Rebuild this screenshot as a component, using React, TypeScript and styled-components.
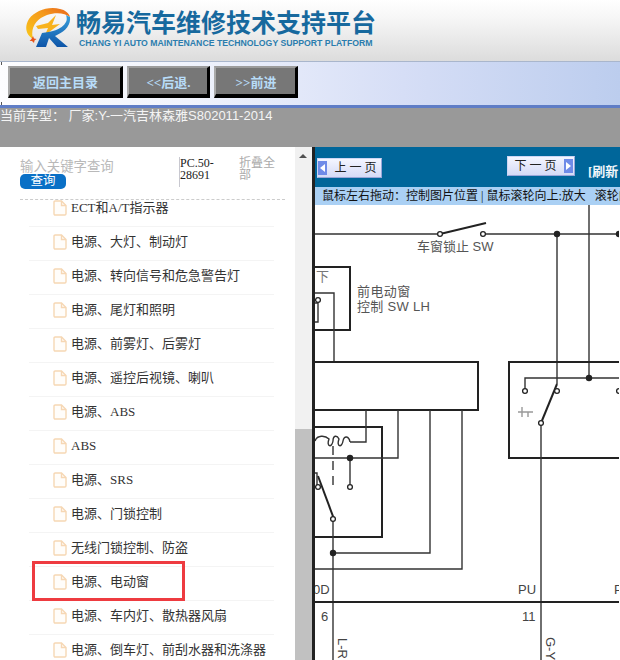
import React from "react";
import styled, { createGlobalStyle } from "styled-components";

const Global = createGlobalStyle`
  html, body { margin: 0; padding: 0; width: 620px; height: 660px; overflow: hidden; background: #fff; }
  * { box-sizing: border-box; }
`;
const SERIF = `"Liberation Serif", "Noto Sans CJK SC", serif`;
const SANS = `"Liberation Sans", "Noto Sans CJK SC", sans-serif`;

const Page = styled.div`width: 620px; height: 660px; display: flex; flex-direction: column; overflow: hidden;`;
const Header = styled.header`
  height: 62px; flex: none; display: flex; align-items: flex-start; gap: 3px; padding: 8px 0 0 25px;
  background: linear-gradient(#fff 0%, #f6f6f6 30%, #dcdcdc 100%);
  border-bottom: 1px solid #a9b6cc;
`;
const Brand = styled.div`display: flex; flex-direction: column; margin-top: 1px;`;
const Title = styled.div`
  font: bold 25px/28px ${SANS}; color: #17699e; white-space: nowrap;
`;
const Sub = styled.div`
  font: bold 8.7px/11px ${SANS}; color: #2b7dae; white-space: nowrap; margin: 1px 0 0 3px;
`;
const Toolbar = styled.nav`
  position: relative; height: 46px; flex: none; display: flex; gap: 4px; padding: 4px 0 0 8px; align-items: flex-start;
  background: linear-gradient(90deg, #fdfdff 0%, #f0f3fc 30%, #d6def6 65%, #bccdee 100%);
  border-bottom: 3px solid #5f7dc6;
  &::before, &::after { content: ""; position: absolute; left: 1px; width: 1px; height: 3px; background: #555; }
  &::before { top: 0; }
  &::after { bottom: 0; }
`;
const ToolButton = styled.button<{ $w: number }>`
  width: ${(p) => p.$w}px; height: 32px; margin: 0; padding: 0 0 0 1px; background: #777;
  border-style: solid; border-width: 2px 3px 4px 2px;
  border-color: #9c9c9c #000 #000 #aaa;
  font: bold 13px ${SERIF}; color: #b8dcf8; text-align: center;
`;
const CarBar = styled.div`
  height: 39px; flex: none; background: #999; color: #f4f4f4;
  font: 13px/16px ${SANS}; white-space: nowrap;
`;
const Body = styled.main`flex: 1; display: flex; min-height: 0;`;
const Side = styled.aside`width: 295px; flex: none; display: flex; flex-direction: column; min-height: 0;`;
const SearchArea = styled.div`
  height: 53px; flex: none; margin: 0 10px 0 20px; border-bottom: 1px dashed #ccc;
  display: grid; grid-template-columns: 159px 60px 1fr; padding-top: 10px;
`;
const SearchBox = styled.div`display: flex; flex-direction: column; align-items: flex-start; padding-top: 2px;`;
const Placeholder = styled.div`font: 13.4px/15px ${SANS}; color: #b9b9b9;`;
const SearchButton = styled.button`
  width: 46px; height: 15px; padding: 0; border: 0; border-radius: 5px; background: #0a70c6; color: #fff;
  font: 12.5px/15px ${SANS}; text-align: center;
`;
const Code = styled.div`
  font: 12px/12px ${SERIF}; color: #222; border-left: 1px solid #c8c8d0; height: 30px; width: 48px;
`;
const Collapse = styled.div`font: 12px/12px ${SANS}; color: #aaa; width: 40px;`;
const ListClip = styled.div`flex: 1; overflow: hidden; min-height: 0;`;
const List = styled.ul`list-style: none; margin: -7px 0 0; padding: 0 21px 0 29px;`;
const Row = styled.li`
  position: relative; height: 34px; display: flex; align-items: center; gap: 4px; padding: 0 0 3px 24px;
  border-bottom: 1px solid #f4f4f4; font: 13px/16px ${SERIF}; color: #333; white-space: nowrap;
`;
const Marker = styled.span`
  position: absolute; left: 3px; top: -6px; width: 153px; height: 40px; border: 3px solid #ee3b40; pointer-events: none;
`;
const ScrollTrack = styled.div`width: 17px; flex: none; background: #f1f1f1; position: relative;`;
const ScrollUp = styled.span`
  position: absolute; left: 4px; top: 7px; width: 0; height: 0;
  border-left: 4px solid transparent; border-right: 4px solid transparent; border-bottom: 4px solid #505050;
`;
const ScrollThumb = styled.span`position: absolute; left: 0; right: 0; top: 282px; bottom: 0; background: #c1c1c1;`;
const Viewer = styled.section`
  flex: 1; min-width: 0; display: flex; flex-direction: column; border-left: 3px solid #222; overflow: hidden;
`;
const PageBar = styled.div`
  height: 40px; flex: none; background: #00669a; display: flex; align-items: flex-start; padding: 9px 0 0 2px; white-space: nowrap;
`;
const PageButton = styled.button<{ $w: number; $next?: boolean }>`
  width: ${(p) => p.$w}px; height: 20px; padding: 0 ${(p) => (p.$next ? 11 : 0)}px 0 ${(p) => (p.$next ? 0 : 12)}px; margin: ${(p) => (p.$next ? "0 0 0 125px" : "2px 0 0")};
  position: relative; border: 1px solid #cdd6f4; border-right-color: #9aa6d8; border-bottom-color: #9aa6d8;
  background: linear-gradient(#f4f6ff, #d5dbf6); font: 12px/17px ${SERIF}; color: #222;
`;
const PageArrow = styled.span<{ $next?: boolean }>`
  position: absolute; top: 2px; bottom: 2px; width: 9px; ${(p) => (p.$next ? "right: 1px;" : "left: 0;")}
  background: #6f8be8; display: flex; align-items: center; justify-content: center;
  &::after {
    content: ""; width: 0; height: 0; border-top: 4px solid transparent; border-bottom: 4px solid transparent;
    ${(p) => (p.$next ? "border-left: 5px solid #fff;" : "border-right: 5px solid #fff;")}
  }
`;
const Refresh = styled.span`font: bold 13px/16px ${SERIF}; color: #f2f6fa; margin: 8px 0 0 13px;`;
const HintBar = styled.div`
  height: 18px; flex: none; background: #aad0f4; font: 12px/18px ${SERIF}; color: #111; padding-left: 7px; white-space: nowrap;
`;
const Diagram = styled.svg`display: block; flex: none;`;

const items = [
  "ECT和A/T指示器", "电源、大灯、制动灯", "电源、转向信号和危急警告灯", "电源、尾灯和照明",
  "电源、前雾灯、后雾灯", "电源、遥控后视镜、喇叭", "电源、ABS", "ABS", "电源、SRS", "电源、门锁控制",
  "无线门锁控制、防盗", "电源、电动窗", "电源、车内灯、散热器风扇", "电源、倒车灯、前刮水器和洗涤器",
];

const FileIcon = () => (
  <svg width="14" height="16" viewBox="0 0 14 16" fill="#fffdfa" stroke="#f6d7b4" strokeWidth="1.4">
    <path d="M1 2.2Q1 1 2.2 1H8.5L13 5.5V13.8Q13 15 11.8 15H2.2Q1 15 1 13.8Z" />
    <path d="M8.5 1V5.5H13" fill="none" />
  </svg>
);

const Logo = () => (
  <svg width="48" height="42" viewBox="25 8 48 42">
    <defs>
      <linearGradient id="ring" x1="0" y1="1" x2="1" y2="0">
        <stop offset="0" stopColor="#f9c81a" />
        <stop offset="0.6" stopColor="#f59a1c" />
        <stop offset="1" stopColor="#e8641a" />
      </linearGradient>
      <linearGradient id="blue" x1="0" y1="0" x2="0" y2="1">
        <stop offset="0" stopColor="#39a0dc" />
        <stop offset="1" stopColor="#0e55a8" />
      </linearGradient>
    </defs>
    <path d="M33 39C26 35 24 27 29 19C35 11 48 6 60 9C65 10 69 13 70 17C65 13 56 12 47 15C36 19 30 28 33 39Z" fill="url(#ring)" />
    <path d="M36 26L48 23L56 15L52 25L60 24L45 35L48 28L38 29Z" fill="#f8b21c" />
    <path d="M70 17C71 24 66 31 57 35L55 36L68 47H57L49 38L46 47H36L42 33C50 32 62 30 66 22C67 20 67 18 66 15Z" fill="url(#blue)" />
    <path d="M33 36L34 38.4L36.5 39L34.5 40.5L34 43L32 41L29.6 41L31.5 39Z" fill="#e8541a" />
  </svg>
);

const Dot = ({ x, y }: { x: number; y: number }) => <circle cx={x} cy={y} r="3.2" fill="#222" stroke="none" />;
const Hollow = ({ x, y }: { x: number; y: number }) => <circle cx={x} cy={y} r="2.4" fill="#fff" stroke="#222" strokeWidth="1.3" />;

const WiringDiagram = () => (
  <Diagram width="304" height="455" viewBox="316 205 304 455" fill="none" stroke="#333" strokeWidth="1.4">
    <path d="M316 234H441M484 234H620M558 234V384M590 205V378" />
    <path d="M441 234L487 223" stroke="#222" strokeWidth="2" />
    <path d="M316 267H351V330H316" strokeWidth="2" stroke="#222" />
    <path d="M316 293H335V362" />
    <path d="M316 303H319V322H316" />
    <path d="M316 362H479V410H316" strokeWidth="2" stroke="#222" />
    <path d="M620 362H510V458H620" strokeWidth="2" stroke="#222" />
    <path d="M526 391V378H620" />
    <path d="M542 423V660" />
    <path d="M542 423L558 384" stroke="#222" strokeWidth="2" />
    <path d="M316 427H383V537H316" strokeWidth="2" stroke="#222" />
    <path d="M367 410V442H351M399 410V458H316M431 410V553H334M463 410V569H316" />
    <path d="M351 458V487" />
    <path d="M316 441C318 435 326 435 330 439C327 447 333 448 334 441C334 435 338 435 340 439C337 447 343 448 344 441C345 435 350 436 351 442" />
    <path d="M334 446V488" strokeDasharray="9 6" />
    <path d="M334 519V660" />
    <path d="M319 476L335 519" stroke="#222" strokeWidth="2" />
    <path d="M316 473H318V487" />
    <path d="M316 602H620" stroke="#222" strokeWidth="2" />
    <path d="M523 407V417M519 412H534M529 412V417" stroke="#999" />
    <Hollow x={441} y={234} /><Hollow x={484} y={234} />
    <Hollow x={319} y={300} />
    <Hollow x={526} y={391} /><Hollow x={558} y={391} /><Hollow x={542} y={423} />
    <Hollow x={351} y={487} /><Hollow x={319} y={487} /><Hollow x={334} y={519} />
    <Hollow x={620} y={391} />
    <Dot x={558} y={234} /><Dot x={620} y={234} /><Dot x={590} y={378} /><Dot x={351} y={458} /><Dot x={334} y={553} />
    <g fill="#555" stroke="none" fontFamily={SANS} fontSize="13">
      <text x="418" y="251">车窗锁止 SW</text>
      <text x="317" y="281" fill="#777">下</text>
      <text x="358" y="296" letterSpacing="0.4">前电动窗</text>
      <text x="358" y="311" letterSpacing="0.3">控制 SW LH</text>
    </g>
    <g fill="#444" stroke="none" fontFamily={SANS} fontSize="13">
      <text x="314" y="594">0D</text>
      <text x="519" y="594">PU</text>
      <text x="615" y="594">P</text>
      <text x="322" y="621">6</text>
      <text x="523" y="621">11</text>
      <text transform="translate(339 638) rotate(90)">L-R</text>
      <text transform="translate(547 637) rotate(90)">G-Y</text>
    </g>
  </Diagram>
);

export default function App() {
  return (
    <Page>
      <Global />
      <Header>
        <Logo />
        <Brand>
          <Title>畅易汽车维修技术支持平台</Title>
          <Sub>CHANG YI AUTO MAINTENANCE TECHNOLOGY SUPPORT PLATFORM</Sub>
        </Brand>
      </Header>
      <Toolbar>
        <ToolButton $w={115}>返回主目录</ToolButton>
        <ToolButton $w={83}>&lt;&lt;后退.</ToolButton>
        <ToolButton $w={84}>&gt;&gt;前进</ToolButton>
      </Toolbar>
      <CarBar>当前车型： 厂家:Y-一汽吉林森雅S802011-2014</CarBar>
      <Body>
        <Side>
          <SearchArea>
            <SearchBox>
              <Placeholder>输入关键字查询</Placeholder>
              <SearchButton>查询</SearchButton>
            </SearchBox>
            <Code>PC.50-28691</Code>
            <Collapse>折叠全部</Collapse>
          </SearchArea>
          <ListClip>
            <List>
              {items.map((t) => (
                <Row key={t}>
                  <FileIcon />
                  {t}
                  {t === "电源、电动窗" && <Marker />}
                </Row>
              ))}
            </List>
          </ListClip>
        </Side>
        <ScrollTrack>
          <ScrollUp />
          <ScrollThumb />
        </ScrollTrack>
        <Viewer>
          <PageBar>
            <PageButton $w={65}><PageArrow />上 一 页</PageButton>
            <PageButton $w={68} $next>下 一 页<PageArrow $next /></PageButton>
            <Refresh>[刷新</Refresh>
          </PageBar>
          <HintBar>鼠标左右拖动：控制图片位置 | 鼠标滚轮向上:放大&nbsp;&nbsp;&nbsp;滚轮向下:缩小</HintBar>
          <WiringDiagram />
        </Viewer>
      </Body>
    </Page>
  );
}
